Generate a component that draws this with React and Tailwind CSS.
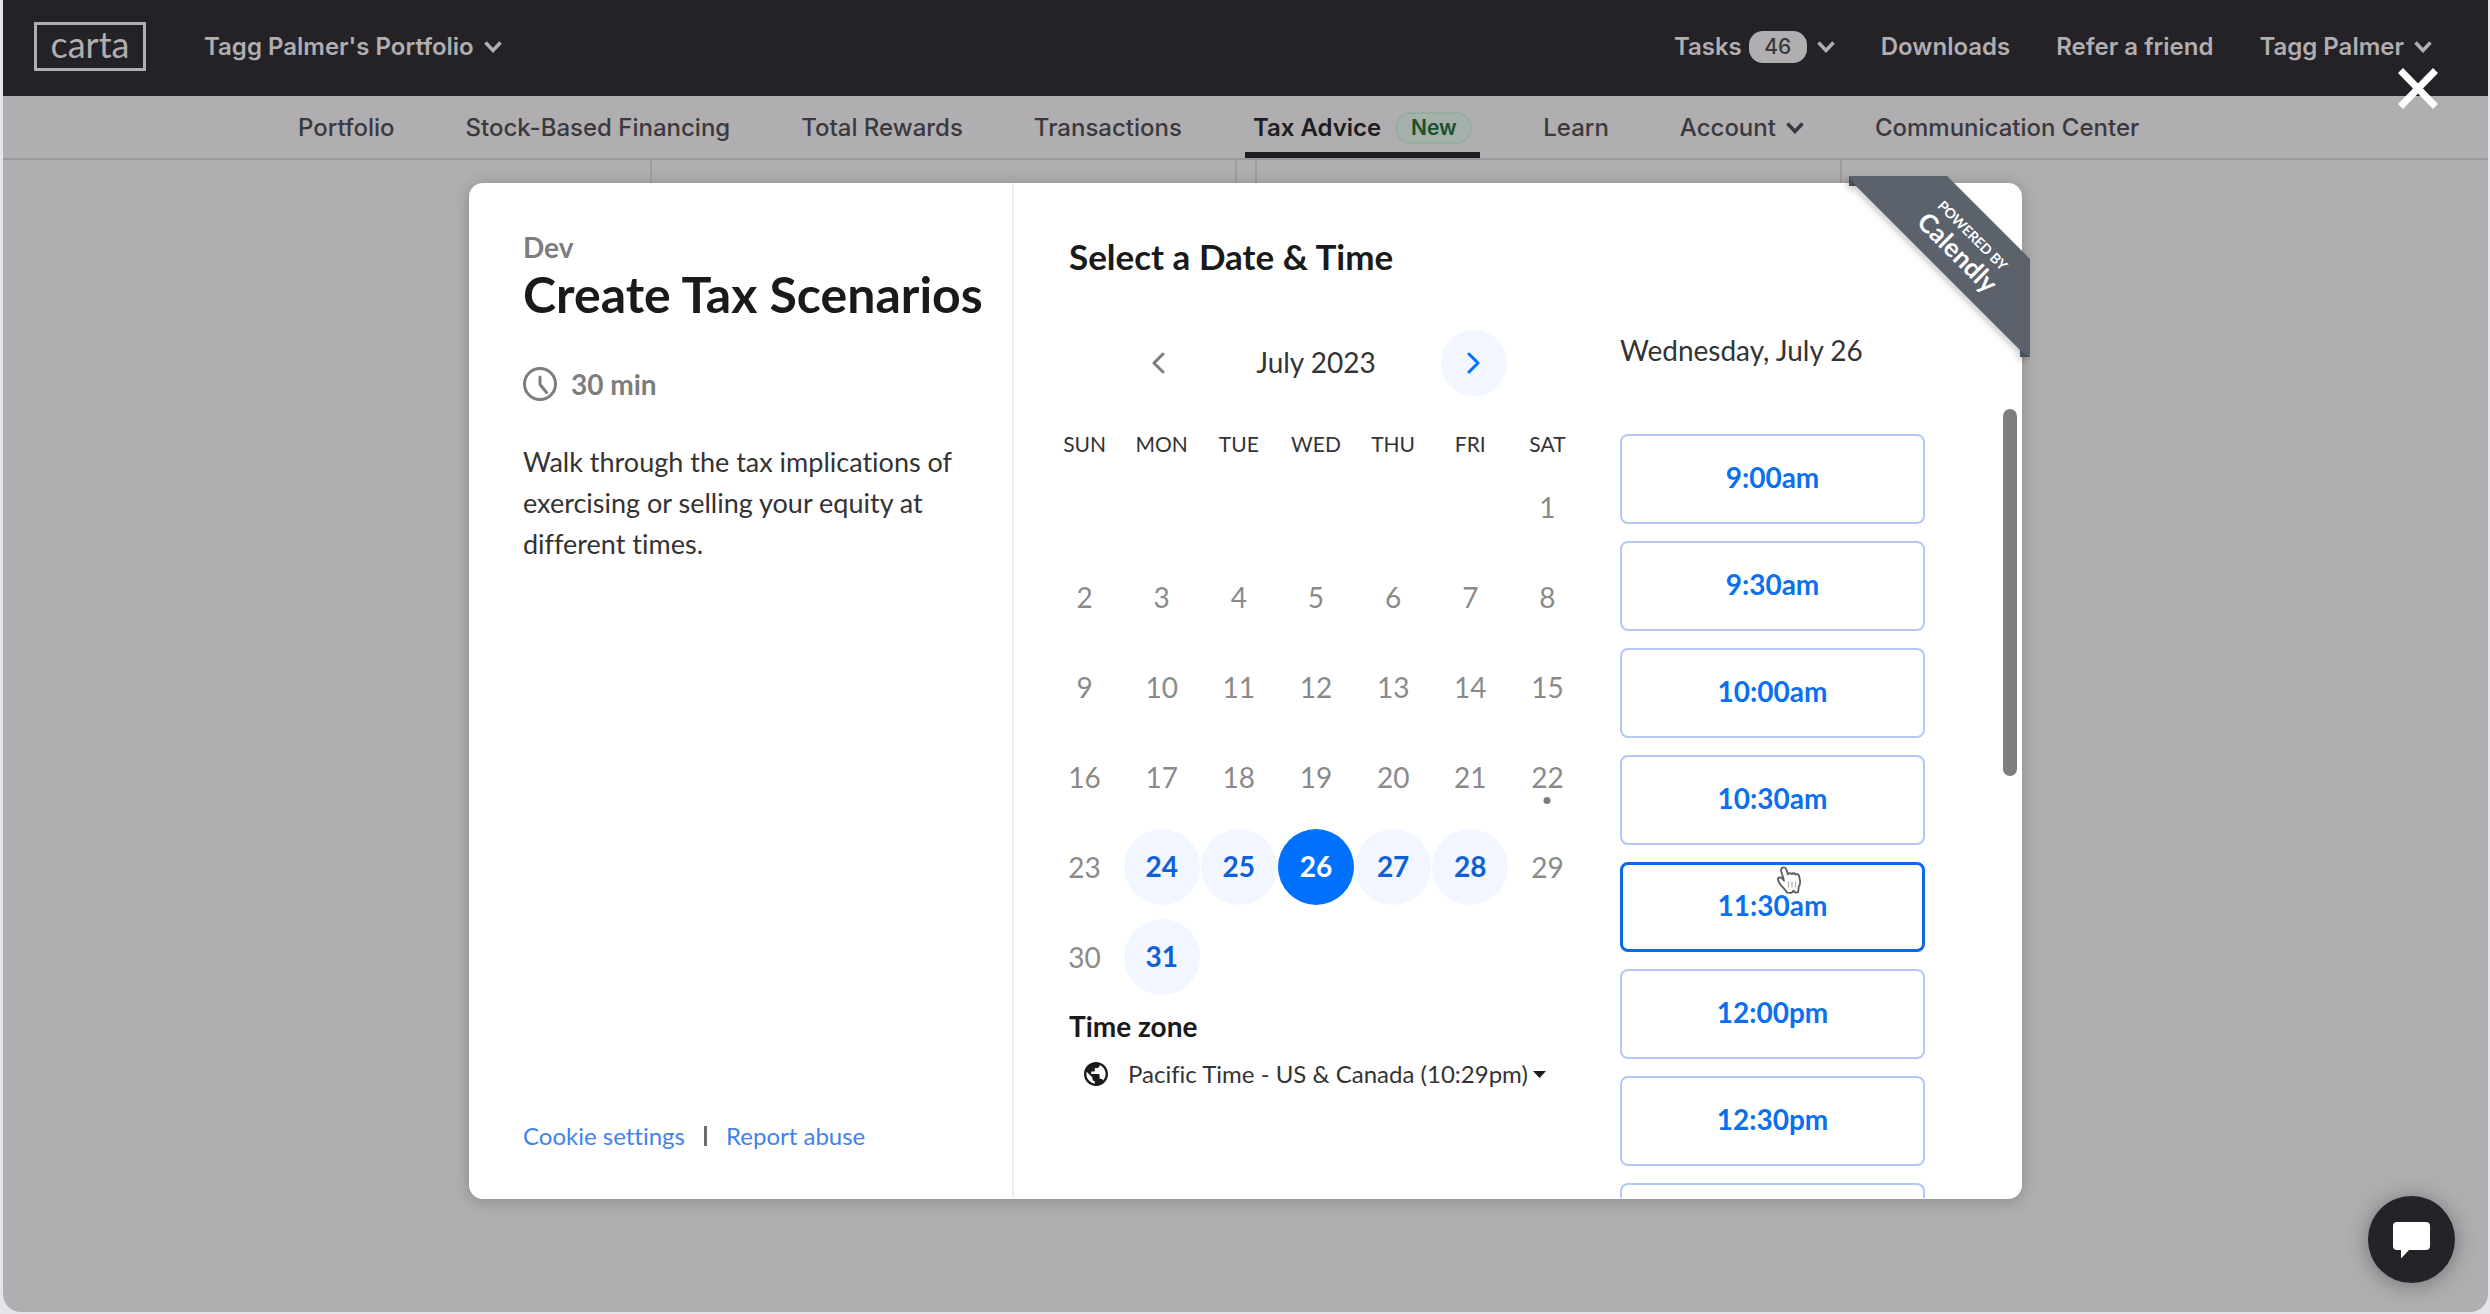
import React, { useState } from 'react';

const navItems = [
  { label: 'Portfolio' },
  { label: 'Stock-Based Financing' },
  { label: 'Total Rewards' },
  { label: 'Transactions' },
  { label: 'Tax Advice', badge: 'New', active: true },
  { label: 'Learn' },
  { label: 'Account', menu: true },
  { label: 'Communication Center' },
];

const weekdays = ['SUN', 'MON', 'TUE', 'WED', 'THU', 'FRI', 'SAT'];

const weeks = [
  [null, null, null, null, null, null, 1],
  [2, 3, 4, 5, 6, 7, 8],
  [9, 10, 11, 12, 13, 14, 15],
  [16, 17, 18, 19, 20, 21, 22],
  [23, 24, 25, 26, 27, 28, 29],
  [30, 31, null, null, null, null, null],
];

const availableDays = [24, 25, 26, 27, 28, 31];
const today = 22;

const slots = ['9:00am', '9:30am', '10:00am', '10:30am', '11:30am', '12:00pm', '12:30pm'];

function ChevronDown() {
  return (
    <svg width="18" height="12" viewBox="0 0 18 12" fill="none" stroke="currentColor" strokeWidth="3.500">
      <path d="M1.500 1.500 9 9.500l7.500-8" />
    </svg>
  );
}

function Chevron({ direction }) {
  return (
    <svg width="14" height="22" viewBox="0 0 14 22" fill="none" stroke="currentColor" strokeWidth="3">
      <path
        d={direction === 'left' ? 'M12 2 3 11l9 9' : 'M2 2l9 9-9 9'}
        strokeLinecap="round"
        strokeLinejoin="round"
      />
    </svg>
  );
}

function HandCursor() {
  return (
    <svg className="absolute left-[156px] top-[3px] z-10" width="28" height="30" viewBox="0 0 28 30">
      <path
        d="M6 3c1.800-1.400 3.800-.4 4.300 1.400l1.800 5c.6-1.700 3-1.800 3.800-.2.9-1.400 3-1.300 3.600.4 1.200-1 3-.5 3.500 1.100l1 4.600c.5 2.800-.2 4.900-1.300 6.700l-.5 5.200-3.100.4-1.500-2-2 2.300-4.500-.2c-1.400-3-4.200-4.600-6.700-8.200C2.500 16.700 1.400 14.500 2 13.200c.8-1.400 2.800-1.200 4.600.8L8 15.600 5.200 6.200C4.900 5 5 3.800 6 3z"
        fill="#fff"
        stroke="#5c5c5c"
        strokeWidth="1.800"
        strokeLinejoin="round"
      />
      <path d="M12.500 16.500v6M16 16.500v6M19.500 16.500v6" stroke="#b5b5b5" strokeWidth="1.400" />
    </svg>
  );
}

function Header() {
  return (
    <header className="flex h-24 items-center bg-[#242226] pl-[31px] pr-14 text-[24px] font-semibold text-[#b0aeb1]">
      <a
        href="#home"
        className="mb-1 flex h-[49px] w-[112px] items-center justify-center border-[3px] border-[#b0aeb1] pb-1 font-['Lato',sans-serif] text-[36px] font-normal"
      >
        carta
      </a>
      <button className="mb-[2px] ml-[58px] flex items-center gap-[10px]">
        Tagg Palmer's Portfolio <ChevronDown />
      </button>
      <nav className="mb-[2px] ml-auto flex items-center gap-[46px]">
        <button className="flex items-center">
          Tasks
          <span className="ml-[7px] mr-[10px] flex h-8 w-[58px] items-center justify-center rounded-[14px] bg-[#b0aeb1] text-[21px] font-medium text-[#3a383c]">
            46
          </span>
          <ChevronDown />
        </button>
        <a href="#downloads">Downloads</a>
        <a href="#refer">Refer a friend</a>
        <button className="flex items-center gap-[10px]">
          Tagg Palmer <ChevronDown />
        </button>
      </nav>
    </header>
  );
}

function SubNav() {
  return (
    <nav className="flex h-[64px] gap-[55px] border-b-[2px] border-[#9b999c] pl-[287px] text-[24px] font-medium text-[#3b393d]">
      {navItems.map((item) => (
        <a
          key={item.label}
          href="#nav"
          className={
            item.active
              ? 'flex items-center gap-[14px] border-b-[6px] border-[#1f1d21] px-2 pt-2 font-semibold text-[#1f1d21]'
              : 'flex items-center gap-[10px] border-b-[6px] border-transparent px-2 pt-2'
          }
        >
          {item.label}
          {item.badge && (
            <span className="flex h-8 w-[77px] items-center justify-center rounded-2xl border-[2px] border-[#97aca1] bg-[#a5b0aa] text-[21px] font-semibold text-[#1c4f2b]">
              {item.badge}
            </span>
          )}
          {item.menu && <ChevronDown />}
        </a>
      ))}
    </nav>
  );
}

function EventInfo() {
  return (
    <section className="flex w-[545px] shrink-0 flex-col border-r-[2px] border-[#ededee] pb-[46px] pl-[54px] pt-12">
      <p className="text-[28px] font-bold leading-8 text-[#7d7d7d]">Dev</p>
      <h1 className="whitespace-nowrap text-[50px] font-bold leading-[62px] text-[#1a1a1a]">Create Tax Scenarios</h1>
      <div className="mt-[42px] flex items-center gap-[14px] text-[28px] font-bold leading-8 text-[#7d7d7d]">
        <svg width="34" height="34" viewBox="0 0 34 34" fill="none" stroke="currentColor" strokeWidth="3">
          <circle cx="17" cy="17" r="15.500" />
          <path d="M17 10v7.500l6.500 8" strokeLinecap="round" strokeLinejoin="round" />
        </svg>
        30 min
      </div>
      <p className="mt-10 max-w-[460px] text-[27px] leading-[41px] text-[#333]">
        Walk through the tax implications of exercising or selling your equity at different times.
      </p>
      <div className="mt-auto flex items-center text-[24px] leading-8 text-[#3f83ec]">
        <a href="#cookies">Cookie settings</a>
        <span className="mx-[19px] h-5 w-[3px] bg-[#6b6b6b]" />
        <a href="#report">Report abuse</a>
      </div>
    </section>
  );
}

function Day({ day, selected, onSelect }) {
  if (!day) return null;
  if (availableDays.includes(day)) {
    return (
      <button
        onClick={() => onSelect(day)}
        className={
          selected
            ? 'size-[76px] rounded-full bg-[#0070ff] pb-[2px] text-[28px] font-bold text-white'
            : 'size-[76px] rounded-full bg-[#f1f6ff] pb-[2px] text-[28px] font-bold text-[#0f60d6]'
        }
      >
        {day}
      </button>
    );
  }
  return (
    <span className="relative inline-block">
      {day}
      {day === today && (
        <span className="absolute left-1/2 top-9 size-[7px] -translate-x-1/2 rounded-full bg-[#7d7d7d]" />
      )}
    </span>
  );
}

function Calendar() {
  const [selectedDay, setSelectedDay] = useState(26);

  return (
    <section className="w-[540px] pt-[53px]">
      <h2 className="ml-[23px] text-[35px] font-bold leading-10 text-[#1a1a1a]">Select a Date &amp; Time</h2>
      <div className="mx-auto mt-[54px] flex w-[382px] items-center justify-between">
        <button aria-label="Previous month" className="flex size-[66px] items-center justify-center text-[#7d7d7d]">
          <Chevron direction="left" />
        </button>
        <span className="pb-[2px] text-[28px] leading-8 text-[#333]">July 2023</span>
        <button
          aria-label="Next month"
          className="flex size-[66px] items-center justify-center rounded-full bg-[#f1f6ff] text-[#0070ff]"
        >
          <Chevron direction="right" />
        </button>
      </div>
      <table className="mt-[30px] w-full table-fixed text-center">
        <thead>
          <tr className="h-9 text-[21px] text-[#333]">
            {weekdays.map((name) => (
              <th key={name} className="p-0 font-normal">{name}</th>
            ))}
          </tr>
        </thead>
        <tbody className="text-[28px] leading-8 text-[#8a8a8a]">
          {weeks.map((week, i) => (
            <tr key={i} className="h-[90px]">
              {week.map((day, j) => (
                <td key={j} className="p-0 align-middle">
                  <Day day={day} selected={day === selectedDay} onSelect={setSelectedDay} />
                </td>
              ))}
            </tr>
          ))}
        </tbody>
      </table>
      <label htmlFor="timezone" className="ml-[23px] mt-2 block text-[28px] font-bold leading-8 text-[#1a1a1a]">
        Time zone
      </label>
      <div className="ml-[38px] mt-4 flex items-center whitespace-nowrap text-[24px] leading-8 text-[#333]">
        <svg width="24" height="24" viewBox="2 2 20 20" fill="#1a1a1a">
          <path d="M12 2C6.480 2 2 6.480 2 12s4.480 10 10 10 10-4.480 10-10S17.520 2 12 2zm-1 17.930c-3.950-.49-7-3.850-7-7.930 0-.62.080-1.210.210-1.790L9 15v1c0 1.100.9 2 2 2v1.930zm6.900-2.540c-.26-.81-1-1.390-1.900-1.390h-1v-3c0-.55-.45-1-1-1H8v-2h2c.55 0 1-.45 1-1V7h2c1.100 0 2-.9 2-2v-.41c2.930 1.190 5 4.060 5 7.410 0 2.080-.8 3.970-2.100 5.390z" />
        </svg>
        <select id="timezone" className="ml-5 appearance-none bg-transparent">
          <option>Pacific Time - US &amp; Canada (10:29pm)</option>
        </select>
        <svg className="ml-1" width="13" height="7" viewBox="0 0 13 7" fill="#1a1a1a">
          <path d="M0 0h13L6.500 7z" />
        </svg>
      </div>
    </section>
  );
}

function TimeSlots() {
  const active = '11:30am';

  return (
    <section className="ml-[34px] w-[305px] pt-[151px]">
      <h3 className="whitespace-nowrap text-[28px] leading-8 text-[#333]">Wednesday, July 26</h3>
      <div className="mt-[68px] flex h-[764px] flex-col gap-[17px] overflow-hidden">
        {slots.map((slot) => (
          <div key={slot} className="relative">
            <button
              className={
                slot === active
                  ? 'h-[90px] w-full rounded-lg border-[3px] border-[#0b69e3] pb-1 text-[28px] font-bold text-[#0a70f0]'
                  : 'h-[90px] w-full rounded-lg border-[2px] border-[#b3c8f5] pb-1 text-[28px] font-bold text-[#0a70f0]'
              }
            >
              {slot}
            </button>
            {slot === active && <HandCursor />}
          </div>
        ))}
        {/* top edge of the next slot, below the fold */}
        <div className="flex-1 rounded-t-lg border-x-[2px] border-t-[2px] border-[#b3c8f5]" />
      </div>
    </section>
  );
}

function Ribbon() {
  return (
    <svg className="absolute -right-2 -top-[7px]" width="190" height="190" viewBox="0 0 190 190" fontFamily="Lato, sans-serif">
      <g style={{ filter: 'drop-shadow(-2px 3px 3px rgba(0,0,0,0.2))' }}>
        <path d="M9 0h98l83 83v98h-10v-7L16 10H9z" fill="#5b626c" />
      </g>
      <path d="M9 0v10h7zM180 174v7h10z" fill="#47505a" />
      <g fill="#fff" textAnchor="middle">
        <text transform="translate(129 63) rotate(45)" fontSize="14" fontWeight="700">POWERED BY</text>
        <text transform="translate(111 83) rotate(45)" fontSize="26" fontWeight="700">Calendly</text>
      </g>
    </svg>
  );
}

export default function App() {
  return (
    <div className="flex min-h-screen flex-col bg-[#e6e5e9] pb-[2px] pl-[3px] pr-[2px] font-['Inter',sans-serif]">
      <div className="relative flex flex-1 flex-col overflow-hidden rounded-b-[18px] bg-[#b0aeb1]">
        <Header />
        <SubNav />
        <main className="flex flex-1 justify-center gap-[18px]">
          <div className="mb-52 w-[587px] border-x-[2px] border-[#9f9da0]" />
          <div className="mb-52 w-[587px] border-x-[2px] border-[#9f9da0]" />
        </main>

        <div className="absolute inset-0 flex items-start justify-center pt-[183px] font-['Lato',sans-serif] [font-variant-ligatures:none]">
          <div
            role="dialog"
            aria-label="Select a Date & Time"
            className="relative flex w-full max-w-[1553px] rounded-[14px] bg-white pb-px shadow-[0_2px_16px_rgba(0,0,0,0.22)]"
          >
            <EventInfo />
            <div className="flex pl-8">
              <Calendar />
              <TimeSlots />
            </div>
            <div className="absolute right-[5px] top-[226px] h-[367px] w-[14px] rounded-full bg-[#7f7d80]" />
            <Ribbon />
          </div>
        </div>

        <button aria-label="Close" className="absolute right-[50px] top-[68px] text-white">
          <svg width="40" height="41" viewBox="0 0 40 41" stroke="currentColor" strokeWidth="7">
            <path d="M2.500 2.500l35 36M37.500 2.500l-35 36" />
          </svg>
        </button>
        <button
          aria-label="Open chat"
          className="absolute bottom-[29px] right-[33px] flex size-[87px] items-center justify-center rounded-full bg-[#232427] shadow-[0_2px_22px_rgba(0,0,0,0.35)]"
        >
          <svg width="37" height="36" viewBox="0 0 37 36" fill="#fff">
            <path d="M4 0h29a4 4 0 0 1 4 4v20a4 4 0 0 1-4 4H16l-8 8.500V28H4a4 4 0 0 1-4-4V4a4 4 0 0 1 4-4z" />
          </svg>
        </button>
      </div>
    </div>
  );
}
